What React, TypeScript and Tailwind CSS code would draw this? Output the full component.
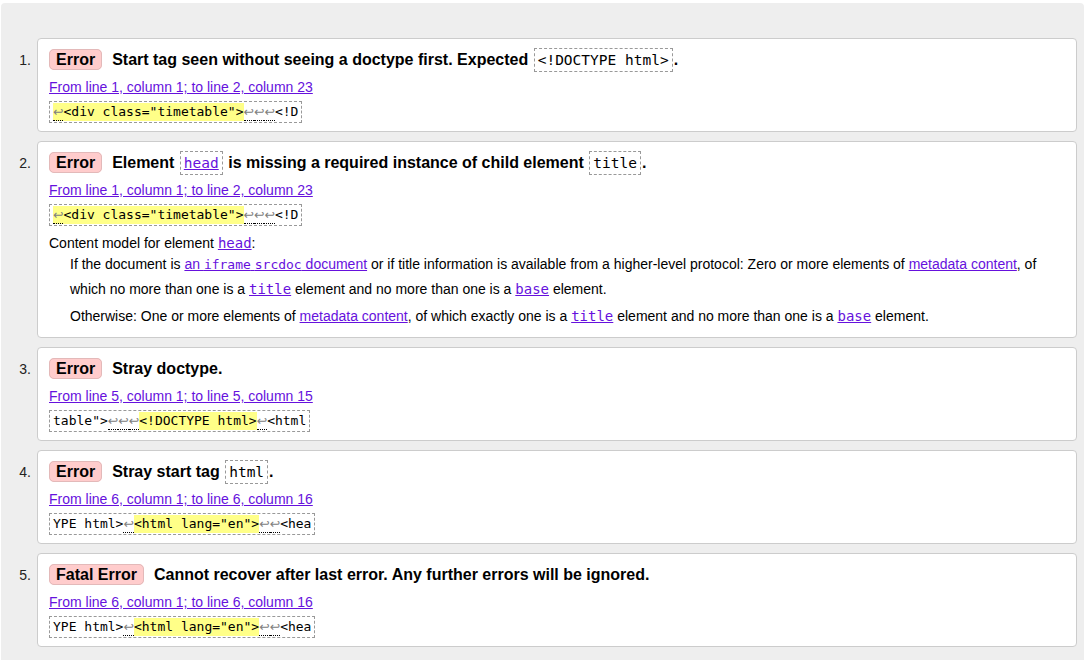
import { ReactNode } from 'react';

type Seg = { t: string; hl?: boolean };

type Message = {
  id: number;
  kind: string;
  title: ReactNode;
  location: string;
  extract: Seg[];
  extra?: ReactNode;
};

const mono = "font-['DejaVu_Sans_Mono','Liberation_Mono',monospace]";

// Inline code in the message title, dashed box like the validator
const TitleCode = ({ children }: { children: ReactNode }) => (
  <code className={`${mono} font-normal text-[14.5px] border border-dashed border-[#999] px-[3px] py-[3px] mx-[1px]`}>
    {children}
  </code>
);

const Link = ({ children, code }: { children: ReactNode; code?: boolean }) => (
  <a href="#" className={`text-[#6611dd] underline ${code ? mono : ''}`}>
    {children}
  </a>
);

// split a chunk of the extract so every newline arrow gets its dotted underline
const renderChunk = (text: string, key: string) => {
  const parts = text.split('↩');
  const out: ReactNode[] = [];
  parts.forEach((p, i) => {
    if (i > 0) {
      out.push(
        <span
          key={`${key}-a${i}`}
          className="inline-block font-['DejaVu_Sans',sans-serif] text-[12.5px] leading-[16px] border-b border-dotted border-black text-[#808080]"
        >
          ↩
        </span>
      );
    }
    if (p) out.push(<span key={`${key}-t${i}`}>{p}</span>);
  });
  return out;
};

const Extract = ({ segs }: { segs: Seg[] }) => (
  <div className={`${mono} w-fit mt-[5px] border border-dashed border-[#999] px-[3px] py-px text-[13px] leading-[18px] text-black whitespace-pre`}>
    {segs.map((s, i) =>
      s.hl ? (
        <span key={i} className="inline-block bg-[#ffff88] leading-[18px]">
          {renderChunk(s.t, `s${i}`)}
        </span>
      ) : (
        <span key={i}>{renderChunk(s.t, `s${i}`)}</span>
      )
    )}
  </div>
);

const messages: Message[] = [
  {
    id: 1,
    kind: 'Error',
    title: (
      <>
        Start tag seen without seeing a doctype first. Expected <TitleCode>{'<!DOCTYPE html>'}</TitleCode>.
      </>
    ),
    location: 'From line 1, column 1; to line 2, column 23',
    extract: [{ t: '↩<div class="timetable">', hl: true }, { t: '↩↩↩<!D' }],
  },
  {
    id: 2,
    kind: 'Error',
    title: (
      <>
        Element <TitleCode><Link>head</Link></TitleCode> is missing a required instance of child element{' '}
        <TitleCode>title</TitleCode>.
      </>
    ),
    location: 'From line 1, column 1; to line 2, column 23',
    extract: [{ t: '↩<div class="timetable">', hl: true }, { t: '↩↩↩<!D' }],
    extra: (
      <div className="mt-[8px] text-[14px] text-black">
        <div className="leading-[18px]">
          Content model for element <Link code>head</Link>:
        </div>
        <div className="pl-[21px] leading-[25px]">
          <p>
            If the document is{' '}
            <a href="#" className="text-[#6611dd] underline">
              an <span className={`${mono} text-[13px]`}>iframe</span>{' '}
              <span className={`${mono} text-[13px]`}>srcdoc</span> document
            </a>{' '}
            or if title information is available from a higher-level protocol: Zero or more elements of{' '}
            <Link>metadata content</Link>, of
            <br />
            which no more than one is a <Link code>title</Link> element and no more than one is a{' '}
            <Link code>base</Link> element.
          </p>
          <p className="mt-[2px]">
            Otherwise: One or more elements of <Link>metadata content</Link>, of which exactly one is a{' '}
            <Link code>title</Link> element and no more than one is a <Link code>base</Link> element.
          </p>
        </div>
      </div>
    ),
  },
  {
    id: 3,
    kind: 'Error',
    title: <>Stray doctype.</>,
    location: 'From line 5, column 1; to line 5, column 15',
    extract: [{ t: 'table">↩↩↩' }, { t: '<!DOCTYPE html>', hl: true }, { t: '↩<html' }],
  },
  {
    id: 4,
    kind: 'Error',
    title: (
      <>
        Stray start tag <TitleCode>html</TitleCode>.
      </>
    ),
    location: 'From line 6, column 1; to line 6, column 16',
    extract: [{ t: 'YPE html>↩' }, { t: '<html lang="en">', hl: true }, { t: '↩↩<hea' }],
  },
  {
    id: 5,
    kind: 'Fatal Error',
    title: <>Cannot recover after last error. Any further errors will be ignored.</>,
    location: 'From line 6, column 1; to line 6, column 16',
    extract: [{ t: 'YPE html>↩' }, { t: '<html lang="en">', hl: true }, { t: '↩↩<hea' }],
  },
];

const MessageCard = ({ msg }: { msg: Message }) => (
  <div className="flex items-start">
    <div className="w-[36px] shrink-0 pt-[11px] pr-[6px] text-right text-[14px] leading-[22px] text-[#222]">
      {msg.id}.
    </div>
    <div className="flex-1 bg-white border border-[#cccccc] rounded-[4px] pt-[10px] pb-[8px] px-[11px]">
      <p className="text-[16px] font-bold leading-[22px] text-black">
        <span className="bg-[#ffcccc] border border-[#e3b9b9] rounded-[5px] px-[6px] py-px mr-[10px]">
          {msg.kind}
        </span>
        {msg.title}
      </p>
      <div className="mt-[7px] text-[14px] leading-[18px]">
        <Link>{msg.location}</Link>
      </div>
      <Extract segs={msg.extract} />
      {msg.extra}
    </div>
  </div>
);

const App = () => {
  return (
    <div className="min-h-[660px] bg-white pt-[3px] pl-px font-['Liberation_Sans',Arial,sans-serif]">
      <div className="bg-[#eeeeee] rounded-[4px] pt-[35px] pr-[7px] pb-[20px] flex flex-col gap-[9px]">
        {messages.map((m) => (
          <MessageCard key={m.id} msg={m} />
        ))}
      </div>
    </div>
  );
};

export default App;
